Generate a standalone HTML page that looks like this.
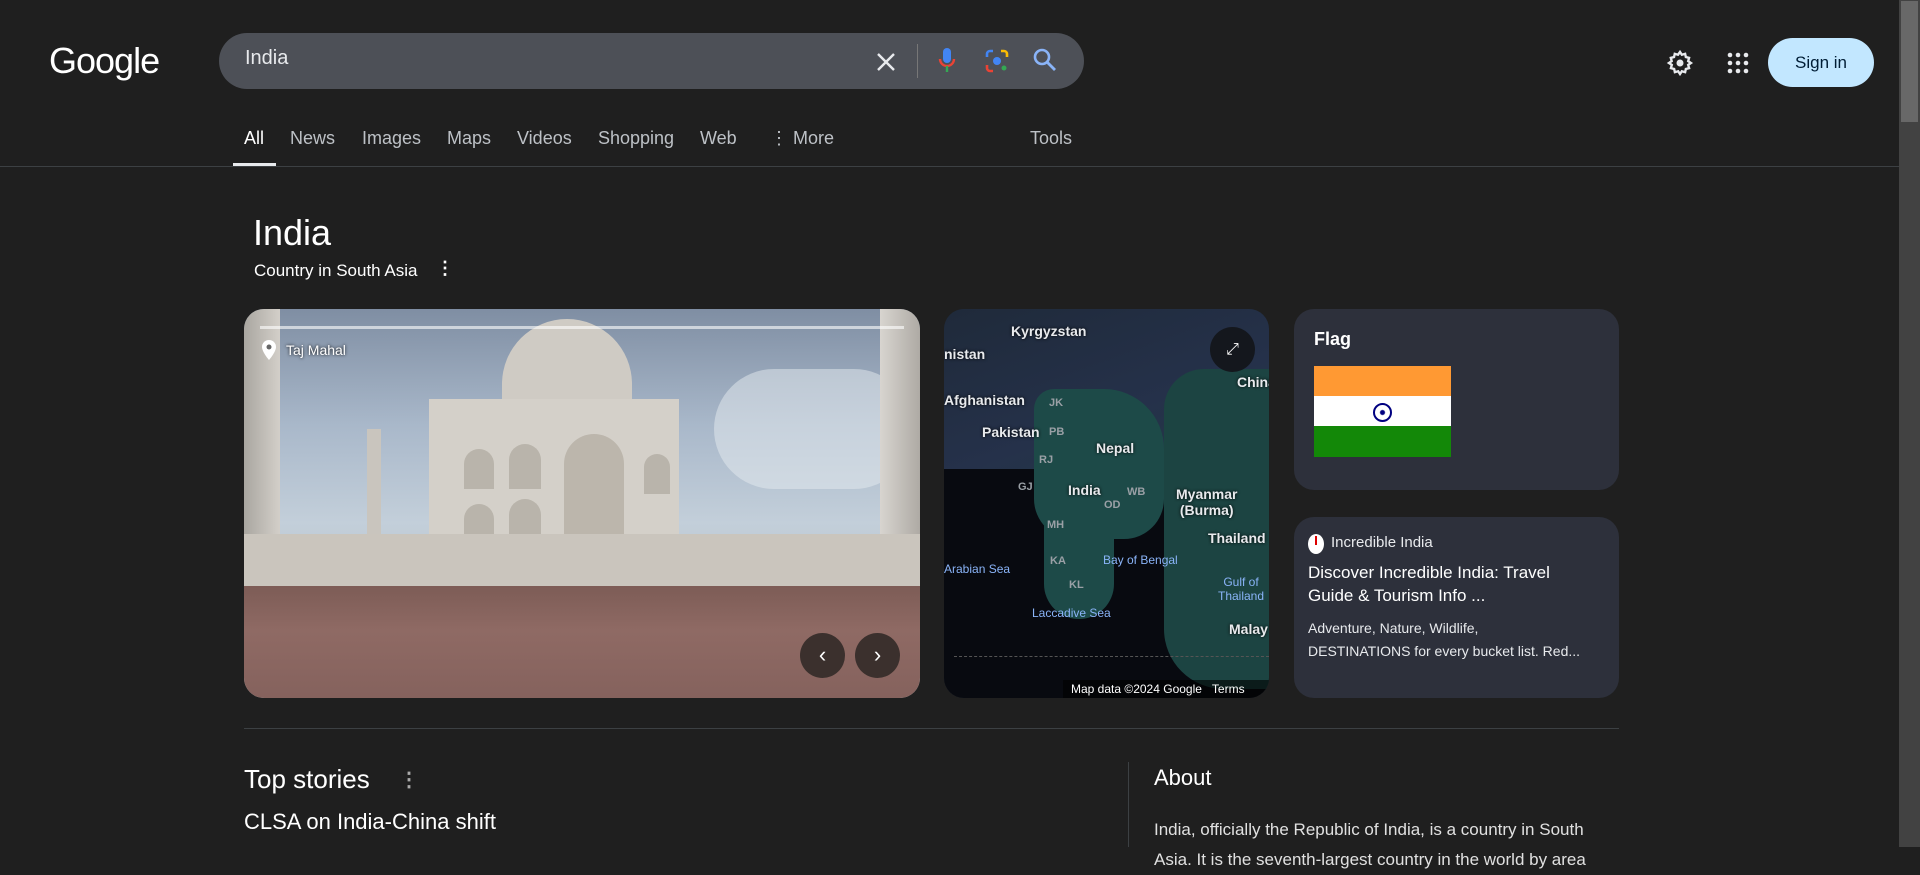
<!DOCTYPE html>
<html><head><meta charset="utf-8"><style>
*{margin:0;padding:0;box-sizing:border-box}
body{width:1920px;height:847px;overflow:hidden;background:#1f1f1f;font-family:"Liberation Sans",Arial,sans-serif;color:#e8e8e8;position:relative}
.a{position:absolute}
.tab{position:absolute;top:128px;font-size:18px;color:#bdc1c6}
.lbl{position:absolute;color:#e8eaed;font-weight:bold;font-size:14px;text-shadow:0 0 3px #000}
.sm{position:absolute;color:#9aa0a6;font-size:11px;font-weight:bold}
.sea{position:absolute;color:#8ab4f8;font-size:12px}
.arch{position:absolute;background:#b9b4ab;border-radius:20px 20px 0 0}
</style></head><body>
<div class="a" style="left:49px;top:40px;font-size:36px;color:#fff;letter-spacing:-1px">Google</div>
<div class="a" style="left:219px;top:33px;width:865px;height:56px;border-radius:28px;background:#4d5057"></div>
<div class="a" style="left:245px;top:47px;font-size:20px;color:#e8eaed">India</div>
<svg class="a" style="left:874px;top:50px" width="24" height="24" viewBox="0 0 24 24"><path d="M4 4L20 20M20 4L4 20" stroke="#e8eaed" stroke-width="2.4"/></svg>
<div class="a" style="left:917px;top:44px;width:1px;height:34px;background:#777"></div>
<svg class="a" style="left:935px;top:46px" width="24" height="30" viewBox="0 0 24 30"><rect x="8" y="2" width="8" height="15" rx="4" fill="#4285f4"/><path d="M5 13a7 7 0 0 0 14 0" stroke="#ea4335" stroke-width="2.4" fill="none"/><path d="M12 20v6" stroke="#34a853" stroke-width="2.4"/></svg>
<svg class="a" style="left:984px;top:48px" width="26" height="26" viewBox="0 0 26 26"><path d="M3 9V6a3 3 0 0 1 3-3h3" stroke="#4285f4" stroke-width="2.6" fill="none"/><path d="M17 3h3a3 3 0 0 1 3 3v3" stroke="#fbbc04" stroke-width="2.6" fill="none"/><path d="M3 17v3a3 3 0 0 0 3 3h3" stroke="#ea4335" stroke-width="2.6" fill="none"/><circle cx="13" cy="13" r="4" fill="#4285f4"/><circle cx="20" cy="20" r="2.5" fill="#34a853"/></svg>
<svg class="a" style="left:1032px;top:47px" width="26" height="26" viewBox="0 0 26 26"><circle cx="10" cy="10" r="7" stroke="#8ab4f8" stroke-width="2.6" fill="none"/><path d="M15 15l8 8" stroke="#8ab4f8" stroke-width="2.8"/></svg>
<svg class="a" style="left:1666px;top:49px" width="28" height="28" viewBox="0 0 24 24"><path fill="none" stroke="#e8eaed" stroke-width="2" d="M12 2.5l1.6 2.4 2.8-.8.6 2.8 2.8.7-.8 2.8 2.4 1.6-2.4 1.6.8 2.8-2.8.7-.6 2.8-2.8-.8L12 21.5l-1.6-2.4-2.8.8-.6-2.8-2.8-.7.8-2.8L2.5 12l2.4-1.6-.8-2.8 2.8-.7.6-2.8 2.8.8z"/><circle cx="12" cy="12" r="3" fill="#e8eaed"/></svg>
<svg class="a" style="left:1727px;top:52px" width="22" height="22" viewBox="0 0 22 22" fill="#e8eaed"><circle cx="3" cy="3" r="2.3"/><circle cx="11" cy="3" r="2.3"/><circle cx="19" cy="3" r="2.3"/><circle cx="3" cy="11" r="2.3"/><circle cx="11" cy="11" r="2.3"/><circle cx="19" cy="11" r="2.3"/><circle cx="3" cy="19" r="2.3"/><circle cx="11" cy="19" r="2.3"/><circle cx="19" cy="19" r="2.3"/></svg>
<div class="a" style="left:1768px;top:38px;width:106px;height:49px;border-radius:25px;background:#c2e7ff;color:#001d35;font-size:17px;text-align:center;line-height:49px">Sign in</div>
<div class="a" style="left:1899px;top:0;width:21px;height:847px;background:#424242"></div>
<div class="a" style="left:1901px;top:1px;width:17px;height:121px;background:#686868"></div>

<div class="tab" style="left:244px;color:#fff">All</div>
<div class="a" style="left:233px;top:163px;width:43px;height:3px;background:#e8eaed"></div>
<div class="tab" style="left:290px">News</div>
<div class="tab" style="left:362px">Images</div>
<div class="tab" style="left:447px">Maps</div>
<div class="tab" style="left:517px">Videos</div>
<div class="tab" style="left:598px">Shopping</div>
<div class="tab" style="left:700px">Web</div>
<div class="tab" style="left:770px">⋮ More</div>
<div class="tab" style="left:1030px">Tools</div>
<div class="a" style="left:0;top:166px;width:1899px;height:1px;background:#3c4043"></div>

<div class="a" style="left:253px;top:212px;font-size:36px;color:#fff">India</div>
<div class="a" style="left:254px;top:261px;font-size:17px;color:#fff">Country in South Asia</div>
<div class="a" style="left:436px;top:258px;font-size:18px;color:#fff;font-weight:bold">⋮</div>

<div class="a" style="left:244px;top:309px;width:676px;height:389px;border-radius:20px;overflow:hidden;background:linear-gradient(180deg,#7f8ea3 0%,#a9b8ca 30%,#c3cfda 55%,#b9c3cc 70%)">
 <div class="a" style="left:470px;top:60px;width:200px;height:120px;border-radius:60px;background:rgba(230,235,240,.5)"></div>
 <div class="a" style="left:0;top:0;width:36px;height:290px;background:linear-gradient(90deg,#a9a6a0,#d3cfc9)"></div>
 <div class="a" style="left:636px;top:0;width:40px;height:290px;background:linear-gradient(90deg,#d8d5d0,#aeaaa4)"></div>
 <div class="a" style="left:123px;top:120px;width:14px;height:110px;background:#c9c5be"></div>
 <div class="a" style="left:258px;top:10px;width:130px;height:120px;background:#cfcbc4;border-radius:65px 65px 10px 10px"></div>
 <div class="a" style="left:185px;top:90px;width:250px;height:140px;background:#d4d0c9"></div>
 <div class="a" style="left:320px;top:125px;width:60px;height:105px;background:#bcb6ac;border-radius:30px 30px 0 0"></div>
 <div class="arch" style="left:220px;top:140px;width:30px;height:40px"></div>
 <div class="arch" style="left:265px;top:135px;width:32px;height:45px"></div>
 <div class="arch" style="left:220px;top:195px;width:30px;height:35px"></div>
 <div class="arch" style="left:265px;top:190px;width:32px;height:40px"></div>
 <div class="arch" style="left:400px;top:145px;width:26px;height:40px"></div>
 <div class="a" style="left:0;top:225px;width:676px;height:52px;background:#cac5bd"></div>
 <div class="a" style="left:0;top:277px;width:676px;height:112px;background:linear-gradient(180deg,#7d5c56,#8f6a64 40%,#85625d)"></div>
 <div class="a" style="left:16px;top:17px;width:644px;height:3px;background:rgba(255,255,255,.6)"></div>
 <svg class="a" style="left:18px;top:31px" width="14" height="20" viewBox="0 0 14 20"><path d="M7 0a7 7 0 0 0-7 7c0 5 7 13 7 13s7-8 7-13a7 7 0 0 0-7-7z" fill="#fff"/><circle cx="7" cy="7" r="2.5" fill="#666"/></svg>
 <div class="a" style="left:42px;top:33px;color:#fff;font-size:14px;text-shadow:0 0 3px #000">Taj Mahal</div>
 <div class="a" style="left:556px;top:324px;width:45px;height:45px;border-radius:50%;background:#3b302d;color:#fff;text-align:center;line-height:43px;font-size:22px">‹</div>
 <div class="a" style="left:611px;top:324px;width:45px;height:45px;border-radius:50%;background:#3b302d;color:#fff;text-align:center;line-height:43px;font-size:22px">›</div>
</div>

<div class="a" style="left:944px;top:309px;width:325px;height:389px;border-radius:20px;overflow:hidden;background:#1c2433">
 <div class="a" style="left:0;top:0;width:325px;height:160px;background:linear-gradient(160deg,#1f2a3a,#25314a 60%,#223a44)"></div>
 <div class="a" style="left:0;top:160px;width:325px;height:229px;background:#080a10"></div>
 <div class="a" style="left:90px;top:80px;width:130px;height:150px;background:#1d4a48;border-radius:20px 60px 40px 40px"></div>
 <div class="a" style="left:100px;top:200px;width:70px;height:110px;background:#1d4a48;border-radius:0 0 40px 40px"></div>
 <div class="a" style="left:220px;top:60px;width:105px;height:320px;background:#1c4442;border-radius:40px 0 0 60px"></div>
 <div class="lbl" style="left:67px;top:14px">Kyrgyzstan</div>
 <div class="lbl" style="left:0;top:37px">nistan</div>
 <div class="lbl" style="left:293px;top:65px">China</div>
 <div class="lbl" style="left:0;top:83px">Afghanistan</div>
 <div class="lbl" style="left:38px;top:115px">Pakistan</div>
 <div class="lbl" style="left:152px;top:131px">Nepal</div>
 <div class="lbl" style="left:124px;top:173px">India</div>
 <div class="lbl" style="left:232px;top:177px">Myanmar<br>&nbsp;(Burma)</div>
 <div class="lbl" style="left:264px;top:221px">Thailand</div>
 <div class="lbl" style="left:285px;top:312px">Malay</div>
 <div class="sea" style="left:0;top:253px">Arabian Sea</div>
 <div class="sea" style="left:159px;top:244px">Bay of Bengal</div>
 <div class="sea" style="left:88px;top:297px">Laccadive Sea</div>
 <div class="sea" style="left:274px;top:266px;text-align:center">Gulf of<br>Thailand</div>
 <div class="sm" style="left:105px;top:88px">JK</div><div class="sm" style="left:105px;top:117px">PB</div><div class="sm" style="left:95px;top:145px">RJ</div><div class="sm" style="left:74px;top:172px">GJ</div><div class="sm" style="left:103px;top:210px">MH</div><div class="sm" style="left:106px;top:246px">KA</div><div class="sm" style="left:125px;top:270px">KL</div><div class="sm" style="left:183px;top:177px">WB</div><div class="sm" style="left:160px;top:190px">OD</div>
 <div class="a" style="left:10px;top:347px;width:315px;border-top:1px dashed #555"></div>
 <div class="a" style="left:266px;top:18px;width:45px;height:45px;border-radius:50%;background:#14171d;color:#fff;text-align:center;line-height:45px;font-size:16px">⤢</div>
 <div class="a" style="left:119px;top:371px;width:206px;height:18px;background:rgba(0,0,0,.6);color:#fff;font-size:12px;padding:2px 8px">Map data ©2024 Google &nbsp;&nbsp;Terms</div>
</div>

<div class="a" style="left:1294px;top:309px;width:325px;height:181px;border-radius:20px;background:#2d303b">
 <div class="a" style="left:20px;top:20px;font-size:18px;color:#fff;font-weight:bold">Flag</div>
 <div class="a" style="left:20px;top:57px;width:137px;height:91px;background:linear-gradient(#ff9933 0 33%,#fff 33% 66%,#138808 66%)"></div>
 <div class="a" style="left:79px;top:94px;width:19px;height:19px;border-radius:50%;border:2px solid #000080;background:radial-gradient(#000080 2px,#fff 3px)"></div>
</div>
<div class="a" style="left:1294px;top:517px;width:325px;height:181px;border-radius:20px;background:#2d303b">
 <div class="a" style="left:14px;top:17px;width:16px;height:20px;border-radius:50%;background:#fff"></div>
 <div class="a" style="left:21px;top:19px;width:2px;height:9px;background:#d00"></div>
 <div class="a" style="left:37px;top:17px;font-size:15px;color:#e8eaed">Incredible India</div>
 <div class="a" style="left:14px;top:44px;font-size:17px;line-height:23px;color:#fff;width:290px">Discover Incredible India: Travel Guide &amp; Tourism Info ...</div>
 <div class="a" style="left:14px;top:100px;font-size:14px;line-height:23px;color:#e8eaed;width:305px">Adventure, Nature, Wildlife,<br>DESTINATIONS for every bucket list. Red...</div>
</div>

<div class="a" style="left:244px;top:728px;width:1375px;height:1px;background:#3c4043"></div>
<div class="a" style="left:244px;top:764px;font-size:26px;color:#fff">Top stories</div>
<div class="a" style="left:399px;top:767px;font-size:20px;color:#aaa;font-weight:bold">⋮</div>
<div class="a" style="left:244px;top:809px;font-size:22px;color:#fff">CLSA on India-China shift</div>
<div class="a" style="left:1128px;top:762px;width:1px;height:85px;background:#3c4043"></div>
<div class="a" style="left:1154px;top:765px;font-size:22px;color:#fff">About</div>
<div class="a" style="left:1154px;top:815px;font-size:17px;line-height:30px;color:#e0e0e0">India, officially the Republic of India, is a country in South<br>Asia. It is the seventh-largest country in the world by area</div>
</body></html>
